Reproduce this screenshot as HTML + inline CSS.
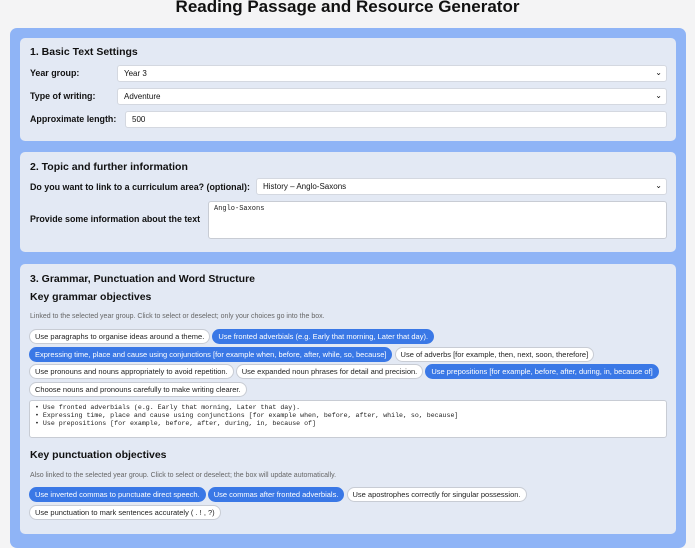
<!DOCTYPE html>
<html><head><style>
*{box-sizing:border-box;margin:0;padding:0}
body{width:695px;height:521px;overflow:hidden;background:#f4f4f5;font-family:"Liberation Sans",Arial,sans-serif;color:#111;position:relative}
h1{position:absolute;top:-3px;left:0;width:695px;text-align:center;font-size:17px;font-weight:bold}
.outer{position:absolute;left:10px;top:28px;width:676px;height:520px;background:#8fb4f6;border-radius:7px}
.sec{position:absolute;left:20px;width:656px;background:#e3e9f4;border-radius:5px}
.h{position:absolute;left:10px;font-size:10.5px;font-weight:bold}
.lab{position:absolute;left:10px;font-size:8.9px;font-weight:bold}
.in{position:absolute;background:#fff;border:1px solid #d4d8e0;border-radius:3px;font-size:8px;padding:3px 6px;height:17px}
.in .ar{position:absolute;right:4px;top:2px;font-size:8px}
.sm{position:absolute;left:10px;font-size:7px;color:#666}
.chips{position:absolute;left:9px;width:645px;font-size:7.5px}
.c{display:inline-block;height:15px;line-height:13px;padding:0 5px;border:1px solid #c8ccd4;border-radius:8px;background:#fff;color:#222;margin:0 0 2.5px 0;white-space:nowrap;vertical-align:top}
.c.b{background:#3a78e6;border-color:#3a78e6;color:#fff}
.ta{position:absolute;background:#fff;border:1px solid #c8ccd4;border-radius:3px;font-family:"Liberation Mono",monospace;font-size:6.6px;line-height:8px;padding:3px 5px;color:#222}
</style></head><body>
<h1>Reading Passage and Resource Generator</h1>
<div class="outer"></div>
<div class="sec" style="top:38px;height:103px">
<div class="h" style="top:8px">1. Basic Text Settings</div>
<div class="lab" style="top:30px">Year group:</div>
<div class="in" style="left:97px;top:27px;width:550px">Year 3<span class="ar">⌄</span></div>
<div class="lab" style="top:53px">Type of writing:</div>
<div class="in" style="left:97px;top:50px;width:550px">Adventure<span class="ar">⌄</span></div>
<div class="lab" style="top:76px">Approximate length:</div>
<div class="in" style="left:105px;top:73px;width:542px">500</div>
</div>
<div class="sec" style="top:152px;height:100px">
<div class="h" style="top:9px">2. Topic and further information</div>
<div class="lab" style="top:30px">Do you want to link to a curriculum area? (optional):</div>
<div class="in" style="left:236px;top:26px;width:411px">History – Anglo-Saxons<span class="ar">⌄</span></div>
<div class="lab" style="top:62px">Provide some information about the text</div>
<div class="ta" style="left:188px;top:49px;width:459px;height:38px;font-size:7px">Anglo-Saxons</div>
</div>
<div class="sec" style="top:264px;height:270px">
<div class="h" style="top:9px">3. Grammar, Punctuation and Word Structure</div>
<div class="h" style="top:27px;font-size:10.5px">Key grammar objectives</div>
<div class="sm" style="top:49px">Linked to the selected year group. Click to select or deselect; only your choices go into the box.</div>
<div class="chips" style="top:65px">
<span class="c">Use paragraphs to organise ideas around a theme.</span> <span class="c b">Use fronted adverbials (e.g. Early that morning, Later that day).</span><br>
<span class="c b">Expressing time, place and cause using conjunctions [for example when, before, after, while, so, because]</span> <span class="c">Use of adverbs [for example, then, next, soon, therefore]</span><br>
<span class="c">Use pronouns and nouns appropriately to avoid repetition.</span> <span class="c">Use expanded noun phrases for detail and precision.</span> <span class="c b">Use prepositions [for example, before, after, during, in, because of]</span><br>
<span class="c">Choose nouns and pronouns carefully to make writing clearer.</span>
</div>
<div class="ta" style="left:9px;top:136px;width:638px;height:38px">• Use fronted adverbials (e.g. Early that morning, Later that day).<br>• Expressing time, place and cause using conjunctions [for example when, before, after, while, so, because]<br>• Use prepositions [for example, before, after, during, in, because of]</div>
<div class="h" style="top:185px;font-size:10.5px">Key punctuation objectives</div>
<div class="sm" style="top:208px">Also linked to the selected year group. Click to select or deselect; the box will update automatically.</div>
<div class="chips" style="top:223px">
<span class="c b">Use inverted commas to punctuate direct speech.</span> <span class="c b">Use commas after fronted adverbials.</span> <span class="c">Use apostrophes correctly for singular possession.</span><br>
<span class="c">Use punctuation to mark sentences accurately ( . ! , ?)</span>
</div>
</div>
</body></html>
